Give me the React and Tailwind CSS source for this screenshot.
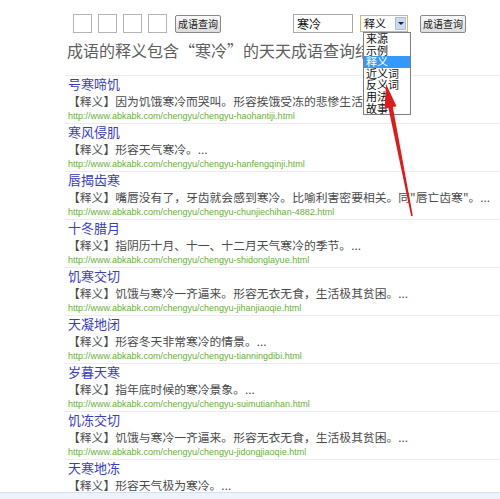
import React from "react";

const results = [
  {
    title: "号寒啼饥",
    def: "【释义】因为饥饿寒冷而哭叫。形容挨饿受冻的悲惨生活。...",
    url: "http://www.abkabk.com/chengyu/chengyu-haohantiji.html",
  },
  {
    title: "寒风侵肌",
    def: "【释义】形容天气寒冷。...",
    url: "http://www.abkabk.com/chengyu/chengyu-hanfengqinji.html",
  },
  {
    title: "唇揭齿寒",
    def: "【释义】嘴唇没有了，牙齿就会感到寒冷。比喻利害密要相关。同\"唇亡齿寒\"。...",
    url: "http://www.abkabk.com/chengyu/chengyu-chunjiechihan-4882.html",
  },
  {
    title: "十冬腊月",
    def: "【释义】指阴历十月、十一、十二月天气寒冷的季节。...",
    url: "http://www.abkabk.com/chengyu/chengyu-shidonglayue.html",
  },
  {
    title: "饥寒交切",
    def: "【释义】饥饿与寒冷一齐逼来。形容无衣无食，生活极其贫困。...",
    url: "http://www.abkabk.com/chengyu/chengyu-jihanjiaoqie.html",
  },
  {
    title: "天凝地闭",
    def: "【释义】形容冬天非常寒冷的情景。...",
    url: "http://www.abkabk.com/chengyu/chengyu-tianningdibi.html",
  },
  {
    title: "岁暮天寒",
    def: "【释义】指年底时候的寒冷景象。...",
    url: "http://www.abkabk.com/chengyu/chengyu-suimutianhan.html",
  },
  {
    title: "饥冻交切",
    def: "【释义】饥饿与寒冷一齐逼来。形容无衣无食，生活极其贫困。...",
    url: "http://www.abkabk.com/chengyu/chengyu-jidongjiaoqie.html",
  },
  {
    title: "天寒地冻",
    def: "【释义】形容天气极为寒冷。...",
  },
];

const options = ["来源", "示例", "释义", "近义词", "反义词", "用法", "故事"];

const cjk = { fontFamily: '"Noto Sans CJK SC", "Liberation Sans", sans-serif' };

function QueryButton() {
  return (
    <div className="flex h-[18px] w-[46px] items-center justify-center rounded-[2px] border border-[#8a8a8a] bg-gradient-to-b from-[#fafafa] to-[#dcdcdc] text-[10px] text-[#222]">
      成语查询
    </div>
  );
}

function ResultItem({ item }) {
  return (
    <div className="h-[48px] border-t border-[#ececec] pl-[3px]">
      <div className="h-[16px] text-[13px] leading-[16px] text-[#3a3acb]">{item.title}</div>
      <div className="h-[18px] whitespace-nowrap text-[11.8px] leading-[18px] text-[#4a4a4a]">{item.def}</div>
      {item.url && (
        <div
          className="h-[13px] text-[9px] leading-[13px] text-[#6aae3c]"
          style={{ fontFamily: '"Liberation Sans", Arial, sans-serif' }}
        >
          {item.url}
        </div>
      )}
    </div>
  );
}

export default function App() {
  return (
    <div className="relative h-[499px] w-[500px] overflow-hidden bg-white" style={cjk}>
      {/* search bar */}
      <div className="mt-[14px] flex h-[19px] items-center pl-[73px]">
        <div className="flex gap-[6px]">
          <div className="h-[19px] w-[19px] border border-[#b4b4b4]" />
          <div className="h-[19px] w-[19px] border border-[#b4b4b4]" />
          <div className="h-[19px] w-[19px] border border-[#b4b4b4]" />
          <div className="h-[19px] w-[19px] border border-[#b4b4b4]" />
        </div>
        <div className="ml-[8px]">
          <QueryButton />
        </div>
        <div className="ml-[72px] flex h-[19px] w-[60px] items-center border border-[#a8a8a8] pl-[3px] text-[12px] text-[#111]">
          寒冷
        </div>
        <div className="ml-[7px] flex h-[17px] w-[48px] items-center justify-between border border-[#d8b860] pl-[3px] text-[11px] text-[#111]">
          释义
          <div className="mr-[1px] flex h-[13px] w-[11px] items-center justify-center border border-[#a9bede] bg-[#c9daf5]">
            <div className="h-0 w-0 border-x-[3px] border-t-[3px] border-x-transparent border-t-[#222]" />
          </div>
        </div>
        <div className="ml-[12px]">
          <QueryButton />
        </div>
      </div>

      {/* heading */}
      <div className="mt-[5px] h-[24px] whitespace-nowrap pl-[67px] text-[16px] leading-[24px] text-[#5e5e5e]">
        成语的释义包含“寒冷”的天天成语查询结果
      </div>

      {/* result list */}
      <div className="mt-[13px] pl-[65px]">
        {results.map((item) => (
          <ResultItem key={item.title} item={item} />
        ))}
      </div>

      {/* footer strip */}
      <div className="absolute bottom-0 left-0 h-[7px] w-full border-t border-[#d6dff0] bg-[#eef2fb]" />

      {/* open select options */}
      <div className="absolute left-[363px] top-[32px] w-[48px] border border-[#7f7f7f] bg-white text-[11px] text-[#111]">
        {options.map((o) => (
          <div
            key={o}
            className={`h-[11.6px] pl-[2px] leading-[11.6px] ${o === "释义" ? "bg-[#3399ff] text-white" : ""}`}
          >
            {o}
          </div>
        ))}
      </div>

      {/* red arrow */}
      <svg className="absolute left-0 top-0" width="500" height="499" viewBox="0 0 500 499">
        <polygon
          points="386,84 396.5,106.3 392.8,107.1 412.8,215.8 411.2,216.2 388.4,107.9 384.7,108.7"
          fill="#e01a1a"
        />
      </svg>
    </div>
  );
}
